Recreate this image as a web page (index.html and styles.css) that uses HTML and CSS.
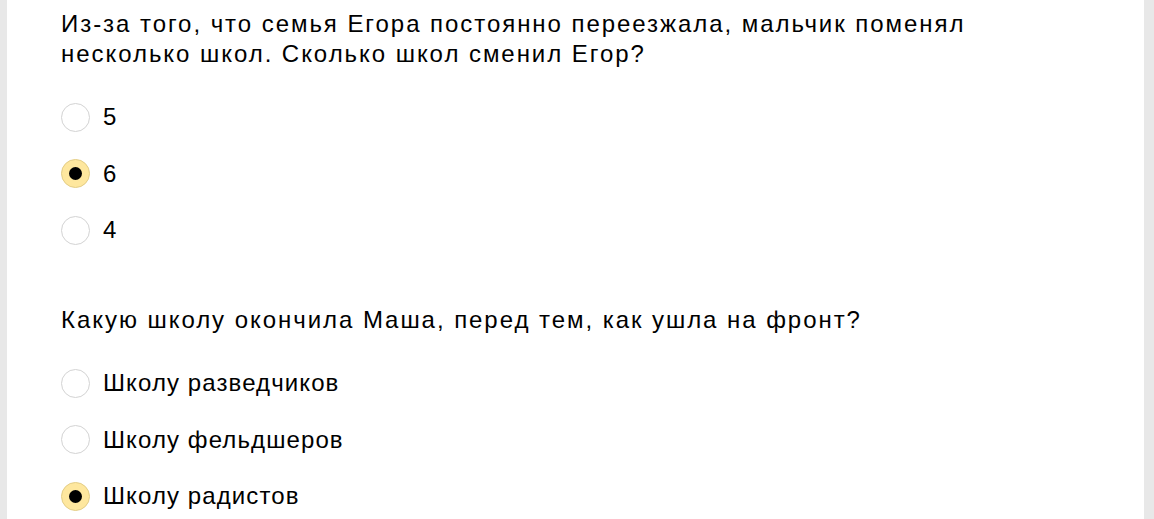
FILE: index.html
```html
<!DOCTYPE html>
<html lang="ru">
<head>
<meta charset="utf-8">
<link rel="stylesheet" href="styles.css">
</head>
<body>
<div class="page">
  <div class="panel">
    <div class="question">
      <div class="title">Из-за того, что семья Егора постоянно переезжала, мальчик поменял несколько школ. Сколько школ сменил Егор?</div>
      <div class="options">
        <label class="option"><span class="radio"></span><span class="label">5</span></label>
        <label class="option"><span class="radio checked"></span><span class="label">6</span></label>
        <label class="option"><span class="radio"></span><span class="label">4</span></label>
      </div>
    </div>
    <div class="question">
      <div class="title">Какую школу окончила Маша, перед тем, как ушла на фронт?</div>
      <div class="options">
        <label class="option"><span class="radio"></span><span class="label">Школу разведчиков</span></label>
        <label class="option"><span class="radio"></span><span class="label">Школу фельдшеров</span></label>
        <label class="option"><span class="radio checked"></span><span class="label">Школу радистов</span></label>
      </div>
    </div>
  </div>
</div>
</body>
</html>
```

FILE: styles.css
```css
html, body {
  margin: 0;
  padding: 0;
  height: 100%;
  overflow: hidden;
}
body {
  background: #e8e8e8;
  font-family: "Liberation Sans", Arial, sans-serif;
  color: #000;
}
.page {
  display: flex;
  padding-left: 7px;
  padding-right: 10px;
  height: 100%;
}
.panel {
  flex: 1;
  background: #fff;
  padding: 9px 60px 0 54px;
}
.question {
  margin-bottom: 61px;
}
.title {
  font-size: 24px;
  line-height: 30px;
  letter-spacing: 1.95px;
  max-width: 960px;
  margin-bottom: 34px;
}
.options {
  display: flex;
  flex-direction: column;
  gap: 28.5px;
}
.option {
  display: flex;
  align-items: center;
  height: 28px;
  gap: 13px;
}
.radio {
  box-sizing: border-box;
  width: 29px;
  height: 29px;
  border-radius: 50%;
  border: 1px solid #d3d3d3;
  background: #fff;
  display: flex;
  align-items: center;
  justify-content: center;
  flex: none;
}
.radio.checked {
  background: #fee79e;
  border-color: #e3cd86;
}
.radio.checked::after {
  content: "";
  width: 13px;
  height: 13px;
  border-radius: 50%;
  background: #000;
}
.label {
  font-size: 24px;
  line-height: 28px;
  letter-spacing: 1.1px;
}
```
